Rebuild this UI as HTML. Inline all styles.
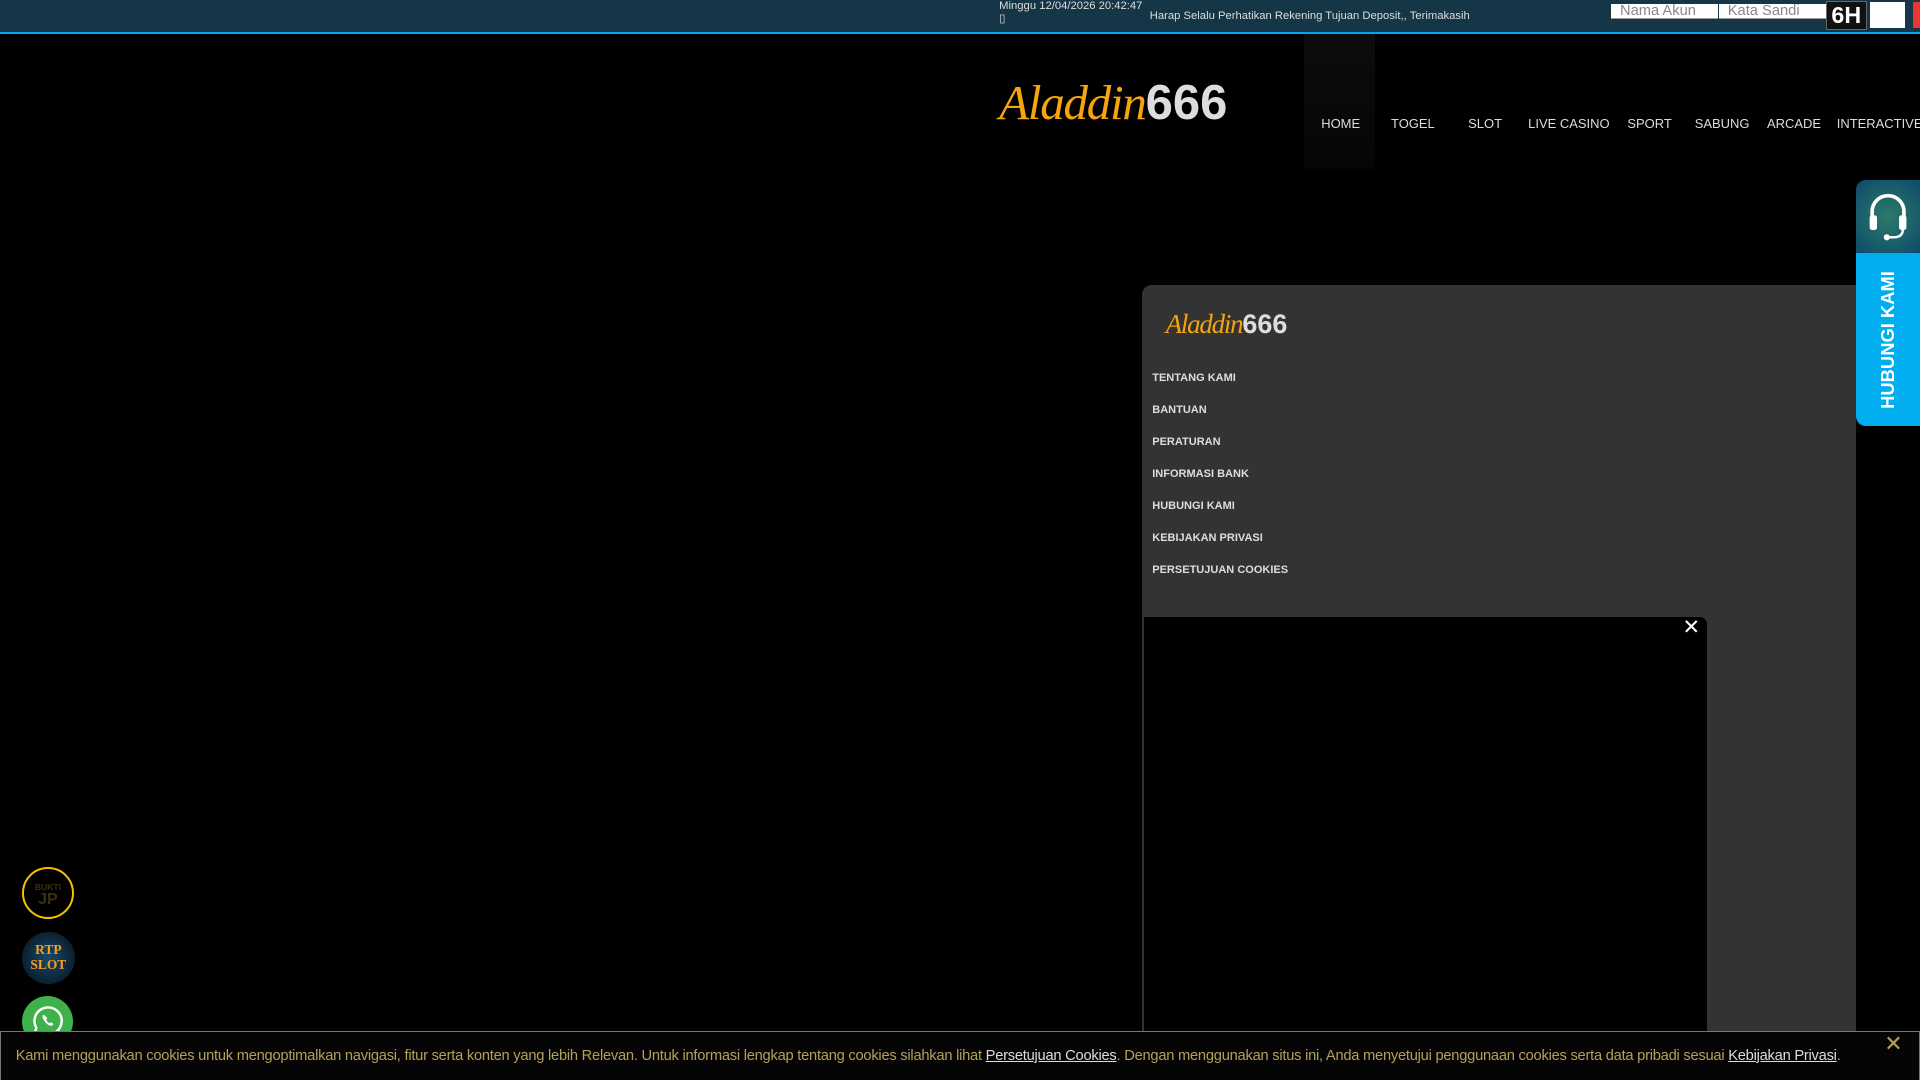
<!DOCTYPE html>
<html><head><meta charset="utf-8">
<style>
html,body{margin:0;padding:0;background:#000;overflow:hidden}
body{width:1568px;height:882px;zoom:1.22449;position:relative;font-family:"Liberation Sans",sans-serif;color:#ddd}
.abs{position:absolute}
.top{left:0;top:0;width:1568px;height:26px;background:#143646;border-bottom:2px solid #00a8e8}
.inp{top:3px;height:12px;background:#fff;border-bottom:1px solid #999;color:#888;font-size:12px;line-height:13px;padding-left:7px}
.nav a{position:absolute;top:95px;font-size:10.6px;color:#ddd;text-decoration:none}
.logo{font-family:"Liberation Serif",serif;font-style:italic;color:#f7a50d;letter-spacing:-1px}
.logo b{font-family:"Liberation Sans Narrow","Liberation Sans",sans-serif;font-style:normal;color:#ddd;letter-spacing:0}
.fl a{display:block;font-size:9px;font-weight:bold;color:#ddd;height:26.1px;line-height:12px}
.cookie{left:0;top:842px;width:1566px;height:39px;background:#050505;border:1px solid #777;color:#b5a05a;font-size:12px}
.cookie u{color:#ddd}
</style></head><body>
<div class="abs top"></div>
<div class="abs" style="left:816px;top:0;font-size:9.2px;color:#ddd;line-height:11px">Minggu 12/04/2026 20:42:47<br>&#9647;</div>
<div class="abs" style="left:939px;top:8px;font-size:9.2px;color:#ddd">Harap Selalu Perhatikan Rekening Tujuan Deposit,, Terimakasih</div>
<div class="abs inp" style="left:1316px;width:80px">Nama Akun</div>
<div class="abs inp" style="left:1404px;width:80px">Kata Sandi</div>
<div class="abs" style="left:1491px;top:1px;width:32px;height:22px;background:#111;border:1px solid #666;color:#fff;font:bold 19px/22px 'Liberation Sans Narrow',sans-serif;text-align:center">6H</div>
<div class="abs" style="left:1527px;top:2px;width:29px;height:21px;background:#fff"></div>
<div class="abs" style="left:1562px;top:2px;width:6px;height:21px;background:#e33"></div>

<div class="abs" style="left:1065px;top:28px;width:58px;height:110px;background:linear-gradient(#0d0d0d,#050505)"></div>
<div class="abs logo" style="left:816px;top:62px;font-size:40px;line-height:44px">Aladdin<b>666</b></div>
<div class="nav">
<a style="left:1079px">HOME</a><a style="left:1136px">TOGEL</a><a style="left:1199px">SLOT</a><a style="left:1248px">LIVE CASINO</a><a style="left:1329px">SPORT</a><a style="left:1384px">SABUNG</a><a style="left:1443px">ARCADE</a><a style="left:1500px">INTERACTIVE</a>
</div>

<div class="abs" style="left:1516px;top:147px;width:52px;height:60px;background:radial-gradient(circle at 50% 50%,#2d7a6a,#0d4a6a);border-radius:8px 0 0 0"></div>
<svg class="abs" style="left:1524px;top:157px" width="36" height="42" viewBox="0 0 36 42"><path d="M5 22V16a13 13 0 0 1 26 0v6" fill="none" stroke="#fff" stroke-width="3"/><rect x="3" y="19" width="6" height="12" rx="2" fill="#fff"/><rect x="27" y="19" width="6" height="12" rx="2" fill="#fff"/><path d="M30 31q0 6-8 6h-4" fill="none" stroke="#fff" stroke-width="2"/><circle cx="17" cy="37" r="2.5" fill="#fff"/></svg>
<div class="abs" style="left:1516px;top:207px;width:52px;height:141px;background:#00aef0;border-radius:0 0 0 8px"></div>
<div class="abs" style="left:1542px;top:278px;transform:translate(-50%,-50%) rotate(-90deg);font-size:15px;font-weight:bold;color:#fff;white-space:nowrap">HUBUNGI KAMI</div>

<div class="abs" style="left:933px;top:233px;width:583px;height:649px;background:#333;border-radius:8px 0 0 0"></div>
<div class="abs logo" style="left:952px;top:251px;font-size:22px;line-height:28px">Aladdin<b>666</b></div>
<div class="abs fl" style="left:941px;top:303px">
<a>TENTANG KAMI</a><a>BANTUAN</a><a>PERATURAN</a><a>INFORMASI BANK</a><a>HUBUNGI KAMI</a><a>KEBIJAKAN PRIVASI</a><a>PERSETUJUAN COOKIES</a>
</div>
<div class="abs" style="left:934px;top:504px;width:460px;height:378px;background:#000;border-radius:0 6px 0 0"></div>
<div class="abs" style="left:1374px;top:502px;font-size:17px;color:#fff">&#x2715;</div>

<div class="abs" style="left:18px;top:708px;width:39px;height:39px;border:2px solid #f5c000;border-radius:50%;text-align:center;color:#3a3010;font-weight:bold;font-size:7px;line-height:9px"><div style="margin-top:11px">BUKTI</div><div style="font-size:13px;line-height:12px">JP</div></div>
<div class="abs" style="left:18px;top:761px;width:43px;height:43px;border-radius:50%;background:radial-gradient(circle,#1a4a6a,#0a2030 70%,#5ac 100%);text-align:center;color:#f5a020;font:bold 11px/12px 'Liberation Serif',serif"><div style="margin-top:9px">RTP<br>SLOT</div></div>
<div class="abs" style="left:18px;top:813px;width:42px;height:42px;border-radius:50%;background:#3fb14a"></div>
<svg class="abs" style="left:26px;top:821px" width="26" height="26" viewBox="0 0 26 26"><path d="M13 2a11 11 0 0 0-9.5 16.5L2 24l5.7-1.5A11 11 0 1 0 13 2z" fill="none" stroke="#fff" stroke-width="2"/><path d="M9 8q-1 2 1 5t5 4q2 0 2.5-1.5l-2-1.5-1 1q-2-1-3-3l1-1-1.5-2z" fill="#fff"/></svg>

<div class="abs cookie"><div style="position:absolute;left:12px;top:13px;white-space:nowrap;letter-spacing:-0.2px">Kami menggunakan cookies untuk mengoptimalkan navigasi, fitur serta konten yang lebih Relevan. Untuk informasi lengkap tentang cookies silahkan lihat <u>Persetujuan Cookies</u>. Dengan menggunakan situs ini, Anda menyetujui penggunaan cookies serta data pribadi sesuai <u>Kebijakan Privasi</u>.</div><div style="position:absolute;left:1538px;top:-1px;font-size:18px;color:#b5a05a">&#x2715;</div></div>
</body></html>
